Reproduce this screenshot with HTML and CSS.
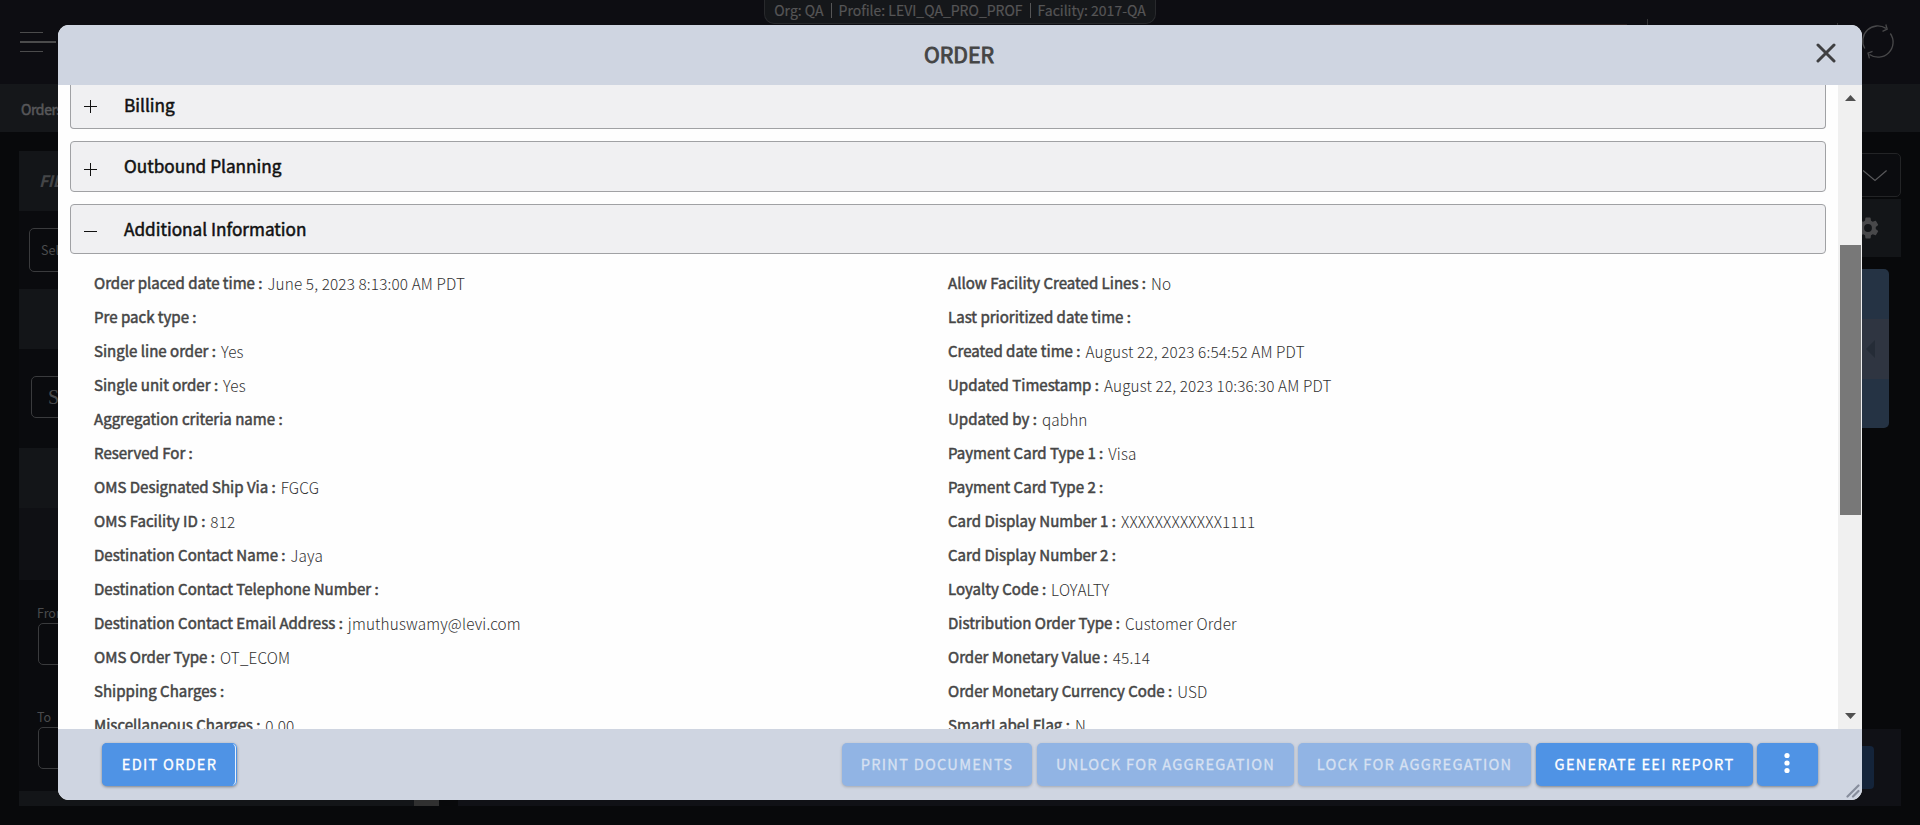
FILE: index.html
```html
<!DOCTYPE html>
<html lang="en">
<head>
<meta charset="utf-8">
<title>Order</title>
<link rel="stylesheet" href="styles.css">
</head>
<body>
<div class="page">
  <header class="topbar">
    <div class="burger"><i></i><i></i><i></i></div>
    <div class="context"><span>Org: QA</span><b></b><span>Profile: LEVI_QA_PRO_PROF</span><b></b><span>Facility: 2017-QA</span></div>
    <div class="marks"><i class="mark-line"></i><i class="mark-a"></i><i class="mark-b"></i></div>
    <svg class="sync" width="34" height="36" viewBox="0 0 34 36" fill="none" stroke="#48484a" stroke-width="1.3"><path d="M3.8 24.5A15 15 0 0 1 25 4.4M21.5 7.3l4.7-2.1-1.4-4.7M29.300 9.500A15 15 0 0 1 8.500 30.500M11.500 27.300 7 29.200l1.400 5.200"/></svg>
  </header>
  <nav class="tabs">Orders</nav>
  <div class="work">
    <aside class="filter">
      <div class="tile tile-title">FILTER</div>
      <div class="field field-first">Select</div>
      <div class="tile tile-second"></div>
      <div class="field field-search">S</div>
      <div class="tile tile-third"></div>
      <div class="tile-body"></div>
      <label class="cap cap-from">From</label>
      <div class="field field-date"></div>
      <label class="cap cap-to">To</label>
      <div class="field field-date"></div>
      <div class="filter-foot"><i></i></div>
    </aside>
    <main class="results">
      <div class="picker"><svg width="24" height="12" viewBox="0 0 24 12" fill="none" stroke="#59595b" stroke-width="1.2"><path d="M0 .5 12 10.500 23.600.500"/></svg></div>
      <div class="toolbar"><svg width="26" height="26" viewBox="0 0 24 24" fill="#48484a"><path d="M19.140 12.940a7 7 0 0 0 .06-.94 7 7 0 0 0-.07-.94l2.030-1.580a.5.5 0 0 0 .12-.61l-1.920-3.320a.5.5 0 0 0-.59-.22l-2.390.96a7 7 0 0 0-1.620-.94l-.36-2.540A.5.5 0 0 0 13.920 2.400h-3.840a.5.5 0 0 0-.47.410l-.36 2.540a7 7 0 0 0-1.620.94l-2.390-.96a.5.5 0 0 0-.59.22L2.740 8.870a.5.5 0 0 0 .12.610l2.030 1.580a7 7 0 0 0 0 1.880l-2.030 1.580a.5.5 0 0 0-.12.610l1.920 3.320a.5.5 0 0 0 .59.220l2.390-.96a7 7 0 0 0 1.620.940l.36 2.540a.5.5 0 0 0 .47.410h3.840a.5.5 0 0 0 .47-.41l.36-2.540a7 7 0 0 0 1.620-.94l2.390.96a.5.5 0 0 0 .59-.22l1.920-3.320a.5.5 0 0 0-.12-.61zM12 15.600a3.600 3.600 0 1 1 0-7.200 3.600 3.600 0 0 1 0 7.200z"/></svg></div>
      <div class="card"><div class="card-tab"><i></i></div></div>
      <div class="results-foot"><i></i></div>
    </main>
  </div>
</div>

<section class="modal">
  <header class="modal-head">
    <h1>ORDER</h1>
    <svg class="close" width="20" height="20" viewBox="0 0 20 20" stroke="#3f3f41" stroke-width="3" stroke-linecap="round"><path d="M2 2 18 18M18 2 2 18"/></svg>
  </header>
  <div class="modal-body">
    <div class="content">
      <div class="section section-cut"><svg width="13" height="13" stroke="#111" stroke-width="1"><path d="M6.500 0V13M0 6.500H13"/></svg><span>Billing</span></div>
      <div class="section"><svg width="13" height="13" stroke="#111" stroke-width="1"><path d="M6.500 0V13M0 6.500H13"/></svg><span>Outbound Planning</span></div>
      <div class="section section-open"><svg width="13" height="13" stroke="#111" stroke-width="1"><path d="M0 6.500H13"/></svg><span>Additional Information</span></div>
      <div class="details">
        <dl>
          <div><dt>Order placed date time :</dt><dd>June 5, 2023 8:13:00 AM PDT</dd></div>
          <div><dt>Pre pack type :</dt><dd></dd></div>
          <div><dt>Single line order :</dt><dd>Yes</dd></div>
          <div><dt>Single unit order :</dt><dd>Yes</dd></div>
          <div><dt>Aggregation criteria name :</dt><dd></dd></div>
          <div><dt>Reserved For :</dt><dd></dd></div>
          <div><dt>OMS Designated Ship Via :</dt><dd>FGCG</dd></div>
          <div><dt>OMS Facility ID :</dt><dd>812</dd></div>
          <div><dt>Destination Contact Name :</dt><dd>Jaya</dd></div>
          <div><dt>Destination Contact Telephone Number :</dt><dd></dd></div>
          <div><dt>Destination Contact Email Address :</dt><dd>jmuthuswamy@levi.com</dd></div>
          <div><dt>OMS Order Type :</dt><dd>OT_ECOM</dd></div>
          <div><dt>Shipping Charges :</dt><dd></dd></div>
          <div><dt>Miscellaneous Charges :</dt><dd>0.00</dd></div>
        </dl>
        <dl>
          <div><dt>Allow Facility Created Lines :</dt><dd>No</dd></div>
          <div><dt>Last prioritized date time :</dt><dd></dd></div>
          <div><dt>Created date time :</dt><dd>August 22, 2023 6:54:52 AM PDT</dd></div>
          <div><dt>Updated Timestamp :</dt><dd>August 22, 2023 10:36:30 AM PDT</dd></div>
          <div><dt>Updated by :</dt><dd>qabhn</dd></div>
          <div><dt>Payment Card Type 1 :</dt><dd>Visa</dd></div>
          <div><dt>Payment Card Type 2 :</dt><dd></dd></div>
          <div><dt>Card Display Number 1 :</dt><dd>XXXXXXXXXXXX1111</dd></div>
          <div><dt>Card Display Number 2 :</dt><dd></dd></div>
          <div><dt>Loyalty Code :</dt><dd>LOYALTY</dd></div>
          <div><dt>Distribution Order Type :</dt><dd>Customer Order</dd></div>
          <div><dt>Order Monetary Value :</dt><dd>45.14</dd></div>
          <div><dt>Order Monetary Currency Code :</dt><dd>USD</dd></div>
          <div><dt>SmartLabel Flag :</dt><dd>N</dd></div>
        </dl>
      </div>
    </div>
    <div class="scroll">
      <svg width="11" height="6" fill="#505050"><path d="M0 6 5.500 0 11 6z"/></svg>
      <i class="thumb"></i>
      <svg width="11" height="6" fill="#505050"><path d="M0 0 5.500 6 11 0z"/></svg>
    </div>
  </div>
  <footer class="modal-foot">
    <button class="btn btn-edit">EDIT ORDER</button>
    <button class="btn btn-off btn-print">PRINT DOCUMENTS</button>
    <button class="btn btn-off btn-unlock">UNLOCK FOR AGGREGATION</button>
    <button class="btn btn-off btn-lock">LOCK FOR AGGREGATION</button>
    <button class="btn btn-report">GENERATE EEI REPORT</button>
    <button class="btn btn-more"><svg width="6" height="22" fill="#fff"><circle cx="3" cy="3.500" r="2.600"/><circle cx="3" cy="11" r="2.600"/><circle cx="3" cy="18.500" r="2.600"/></svg></button>
  </footer>
  <svg class="grip" width="14" height="14" viewBox="0 0 14 14" stroke="#878d9c" stroke-width="2.200" stroke-linecap="round"><path d="M1.500 12.500 12.500 1.500M7 12.500 12.500 7"/></svg>
</section>
</body>
</html>
```

FILE: styles.css
```css
* { box-sizing: border-box; }
body {
  margin: 0; width: 1920px; height: 825px; overflow: hidden; position: relative;
  background: #08090b; color: #454545;
  font-family: "Noto Sans CJK SC", "Open Sans", sans-serif;
}
i { display: block; }

/* page under the dialog */
.page { display: flex; flex-direction: column; height: 825px; }
.topbar { height: 84px; background: #0d0d12; display: flex; position: relative; }
.burger { margin: 32px 0 0 20px; width: 36px; }
.burger i { height: 1px; width: 23px; background: #4b4b4c; margin-bottom: 8px; }
.burger i:nth-child(2) { width: 36px; height: 2px; }
.context {
  position: absolute; left: 764px; top: 0; width: 392px; height: 24px;
  border: 1px solid #28292c; border-top: 0; border-radius: 0 0 10px 10px; background: #15171a;
  display: flex; align-items: center; justify-content: center; gap: 7px;
  font-size: 14px; line-height: 20px; color: #555556; padding-bottom: 3px; white-space: nowrap;
  -webkit-text-stroke: .2px #555556;
}
.context b { width: 1px; height: 15px; background: #555556; }
.marks { position: absolute; left: 1330px; top: 19px; width: 520px; height: 6px; }
.marks i { position: absolute; background: #343436; }
.mark-line { left: 0; top: 5px; width: 297px; height: 1px; }
.marks .mark-line { background: #2a2020; }
.mark-a { left: 317px; top: 0; width: 1px; height: 6px; }
.mark-b { left: 507px; top: 4px; width: 1px; height: 2px; }
.sync { margin: 24px 0 0 1805px; }
.tabs { height: 48px; background: #15171a; padding-left: 21px; font-size: 14px; letter-spacing: -.4px; line-height: 51px; -webkit-text-stroke: .5px #58585a; color: #58585a; }
.work { display: flex; gap: 19px; padding: 19px 19px 19px; flex: 1; }
.filter { width: 420px; background: #0a0b0e; display: flex; flex-direction: column; }
.tile { height: 60px; background: #131518; flex: none; }
.tile-title { padding-left: 20px; font-size: 16px; letter-spacing: -.5px; line-height: 58px; font-weight: 700; font-style: italic; color: #444547; }
.field { border: 1px solid #3a3b3d; border-radius: 5px; color: #4a4b4d; flex: none; }
.field-first { margin: 17px 10px 0; height: 44px; padding-left: 11px; font-size: 12.500px; line-height: 41px; }
.tile-second { margin-top: 17px; }
.field-search { margin: 27px 12px 0; height: 42px; padding-left: 16px; font: 20px/41px "Liberation Serif", serif; }
.tile-third { margin-top: 30px; }
.tile-body { height: 72px; background: #0f1014; flex: none; }
.cap { font-size: 12.500px; line-height: 16px; color: #4a4b4d; padding-left: 18px; height: 18px; flex: none; }
.cap-from { margin-top: 25px; }
.cap-to { margin-top: 44px; }
.field-date { margin: 0 19px; height: 42px; }
.filter-foot { margin-top: auto; height: 15px; background: #131518; display: flex; justify-content: flex-end; flex: none; }
.filter-foot i { width: 25px; background: #303030; }
.results { flex: 1; display: flex; flex-direction: column; align-items: stretch; }
.picker { height: 44px; margin-top: 2px; border: 1px solid #232426; border-radius: 5px; background: #0b0c0f; display: flex; justify-content: flex-end; padding: 16px 13px 0 0; }
.toolbar { height: 58px; margin-top: 2px; background: #131518; display: flex; justify-content: flex-end; padding: 16px 20px 0 0; }
.card { width: 1431px; height: 159px; margin-top: 12px; background: #253344; border-radius: 5px; padding-top: 50px; }
.card-tab { height: 60px; background: #2f3541; display: flex; justify-content: flex-end; align-items: center; padding-right: 14px; }
.card-tab i { border: 9px solid transparent; border-right-color: #252c37; border-left: 0; }
.results-foot { margin-top: auto; height: 77px; background: #101116; display: flex; justify-content: flex-end; padding: 17px 27px; }
.results-foot i { width: 80px; height: 43px; background: #14243a; border-radius: 4px; }

/* dialog */
.modal {
  position: absolute; left: 58px; top: 25px; width: 1804px; height: 775px;
  display: flex; flex-direction: column; background: #fefefe; border-radius: 11px; overflow: hidden;
}
.modal-head { height: 60px; background: #cfd5e1; display: flex; align-items: center; justify-content: center; position: relative; flex: none; }
.modal-head h1 { margin: 0 2px 3px 0; font-size: 21.300px; line-height: 30px; font-weight: 400; -webkit-text-stroke: .9px #454545; }
.close { position: absolute; right: 26px; top: 18px; }
.modal-body { height: 644px; display: flex; overflow: hidden; flex: none; }
.content { flex: 1; padding: 0 12px; }
.section {
  height: 51px; margin-bottom: 12px; padding-left: 13px; border: 1px solid #a0a1a4; border-radius: 4px;
  background: #f0f0f2; display: flex; align-items: center; gap: 27px;
  font-size: 17.200px; line-height: 26px; color: #111; -webkit-text-stroke: .5px #111;
}
.section svg { margin-top: 6px; }
.section span { margin-top: -1px; }
.section-cut { height: 44px; border-top: 0; border-radius: 0 0 4px 4px; padding-bottom: 4px; }
.section-cut svg { margin-top: 4px; }
.section-cut span { margin-top: 1px; }
.section-open { height: 50px; margin-bottom: 12px; }
.section-open svg { margin-top: 4px; }
.section-open span { margin-top: -1px; }
.details { display: grid; grid-template-columns: 854px 1fr; padding-left: 24px; }
dl { margin: 0; }
dl div { height: 34px; display: flex; gap: 5px; line-height: 34px; font-size: 15.050px; white-space: nowrap; }
dt { -webkit-text-stroke: .5px #454545; }
dd { margin: 0; font-weight: 300; font-size: 15.300px; letter-spacing: .15px; color: #303030; }
.scroll { width: 24px; background: #f0f0f0; display: flex; flex-direction: column; padding: 10px 1px 10px 2px; }
.scroll svg { margin-left: 5px; }
.thumb { height: 270px; margin: 144px 0 198px; background: #787878; }
.modal-foot { height: 71px; background: #cfd5e1; display: flex; padding: 14px 44px; }
.btn {
  height: 43px; border: 0; border-radius: 5px; padding: 0 0 2px; background: #4f93e5; color: #fff;
  font-family: inherit; font-size: 14.600px; line-height: 41px; letter-spacing: 1.250px; font-weight: 400;
  -webkit-text-stroke: .3px #fff; box-shadow: 0 1px 3px rgba(0,0,0,.4); white-space: nowrap;
}
.btn-off { background: #91b4e4; color: #d7e1f2; -webkit-text-stroke-color: #d7e1f2; box-shadow: 0 1px 3px rgba(0,0,0,.22); }
.btn-edit { width: 135px; margin-right: auto; box-shadow: inset 0 0 0 1px #4f93e5, inset -2px 0 0 #e8f1fc, 0 1px 3px rgba(0,0,0,.4); }
.btn-print { width: 190px; }
.btn-unlock { width: 257px; margin-left: 5px; }
.btn-lock { width: 233px; margin-left: 4px; }
.btn-report { width: 217px; margin-left: 5px; }
.btn-more { width: 61px; margin-left: 4px; display: flex; justify-content: center; align-items: center; padding: 0 2px 4px 0; }
.grip { position: absolute; right: 2px; bottom: 2px; }
```
